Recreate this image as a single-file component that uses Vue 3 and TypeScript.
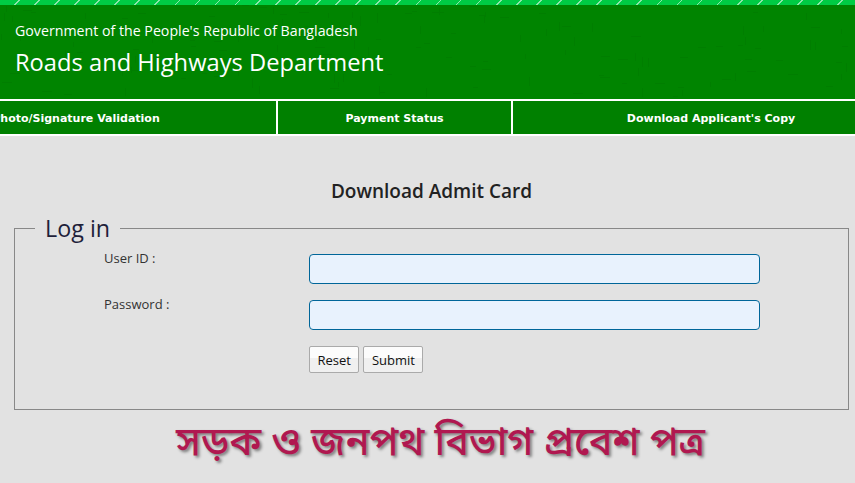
<script setup lang="ts">
const navItems: { label: string; cls: string }[] = [
  { label: 'Photo/Signature Validation', cls: 'first' },
  { label: 'Payment Status', cls: 'second' },
  { label: "Download Applicant's Copy", cls: 'third' },
]
const marks: { x: number; y: number; w: number; h: number }[] = []
let seed = 7
const rnd = (n: number): number => {
  seed = (seed * 9301 + 49297) % 233280
  return Math.floor((seed / 233280) * n)
}
for (let i = 0; i < 150; i++) {
  const flat = rnd(2) === 0
  marks.push({ x: rnd(855), y: rnd(92), w: flat ? 5 + rnd(6) : 1, h: flat ? 1 : 5 + rnd(6) })
}
</script>

<template>
  <div class="page">
    <div class="stripe"></div>
    <header class="banner">
      <svg class="texture" width="855" height="94" aria-hidden="true">
        <rect v-for="(m, i) in marks" :key="i" :x="m.x" :y="m.y" :width="m.w" :height="m.h" fill="#007e00" />
      </svg>
      <div class="gov">Government of the People's Republic of Bangladesh</div>
      <div class="dept">Roads and Highways Department</div>
    </header>
    <nav class="nav">
      <a v-for="item in navItems" :key="item.label" class="nav-item" :class="item.cls">{{ item.label }}</a>
    </nav>
    <main class="content">
      <h2 class="title">Download Admit Card</h2>
      <fieldset class="box">
        <legend class="legend">Log in</legend>
        <div class="form">
          <div class="row">
            <label class="label">User ID :</label>
            <input class="input" type="text" />
          </div>
          <div class="row">
            <label class="label">Password :</label>
            <input class="input" type="password" />
          </div>
          <div class="actions">
            <button class="btn" type="button">Reset</button>
            <button class="btn" type="button">Submit</button>
          </div>
        </div>
      </fieldset>
      <div class="bangla">সড়ক ও জনপথ বিভাগ প্রবেশ পত্র</div>
    </main>
  </div>
</template>

<style scoped>
.page {
  width: 855px;
  height: 483px;
  overflow: hidden;
  background: #e2e2e2;
  font-family: "Open Sans", "Noto Sans", sans-serif;
  color: #222;
}
.stripe {
  height: 5px;
  background: repeating-linear-gradient(135deg, #00cc44 0 13px, #8fe6aa 13px 14.2px);
}
.banner {
  position: relative;
  height: 94px;
  box-sizing: border-box;
  padding: 16px 15px 0;
  background: #008400;
  color: #fff;
  overflow: hidden;
}
.texture {
  position: absolute;
  left: 0;
  top: 0;
}
.gov {
  position: relative;
  font-size: 14.2px;
  line-height: 20px;
}
.dept {
  position: relative;
  margin-top: 5px;
  font-size: 23.7px;
  line-height: 32px;
}
.nav {
  display: flex;
  width: 1100px;
  margin-left: -124px;
  height: 33px;
  border-top: 2px solid #fff;
  border-bottom: 2px solid #fff;
  background: #008000;
}
.nav-item {
  display: flex;
  align-items: center;
  justify-content: center;
  padding-top: 1px;
  font-family: "DejaVu Sans", Verdana, sans-serif;
  font-size: 11px;
  font-weight: 700;
  color: #fff;
  white-space: nowrap;
}
.first { width: 400px; }
.second { width: 233px; border-left: 2px solid #fff; border-right: 2px solid #fff; }
.third { width: 396px; }
.content {
  padding: 0 6px 0 14px;
}
.title {
  margin: 43px 0 0;
  width: 835px;
  text-align: center;
  font-size: 19px;
  line-height: 24px;
  font-weight: 600;
  color: #222;
}
.box {
  box-sizing: border-box;
  width: 835px;
  height: 194px;
  margin: 13px 0 0;
  padding: 0;
  border: 1px solid #888;
  min-inline-size: 0;
}
.legend {
  margin-left: 20px;
  padding: 0 10px;
  font-size: 23.3px;
  line-height: 24px;
  color: #1f1f3a;
}
.form {
  padding: 9px 0 0 89px;
}
.row {
  display: flex;
  align-items: flex-start;
  height: 46px;
}
.label {
  width: 205px;
  font-size: 13px;
  line-height: 18px;
  color: #333;
}
.input {
  box-sizing: border-box;
  width: 451px;
  height: 30px;
  margin-top: 5px;
  border: 1px solid #006699;
  border-radius: 4px;
  background: #e8f2fd;
  outline: none;
}
.actions {
  display: flex;
  gap: 4px;
  margin: 5px 0 0 205px;
}
.btn {
  height: 27px;
  padding: 0 7.5px;
  border: 1px solid #aaa;
  border-radius: 2px;
  background: linear-gradient(#fcfcfc 0 45%, #f0f0f0 45%);
  font-family: "Open Sans", sans-serif;
  font-size: 13px;
  color: #111;
}
.bangla {
  margin-top: 9px;
  padding-left: 9px;
  width: 835px;
  text-align: center;
  font-family: "Noto Sans Bengali", "Noto Sans", "Noto Serif Bengali", "Lohit Bengali", sans-serif;
  font-size: 39.5px;
  line-height: 52px;
  font-weight: 500;
  color: #b01850;
  text-shadow: 2px 2px 3px rgba(0, 0, 0, 0.45);
  white-space: nowrap;
}
</style>
